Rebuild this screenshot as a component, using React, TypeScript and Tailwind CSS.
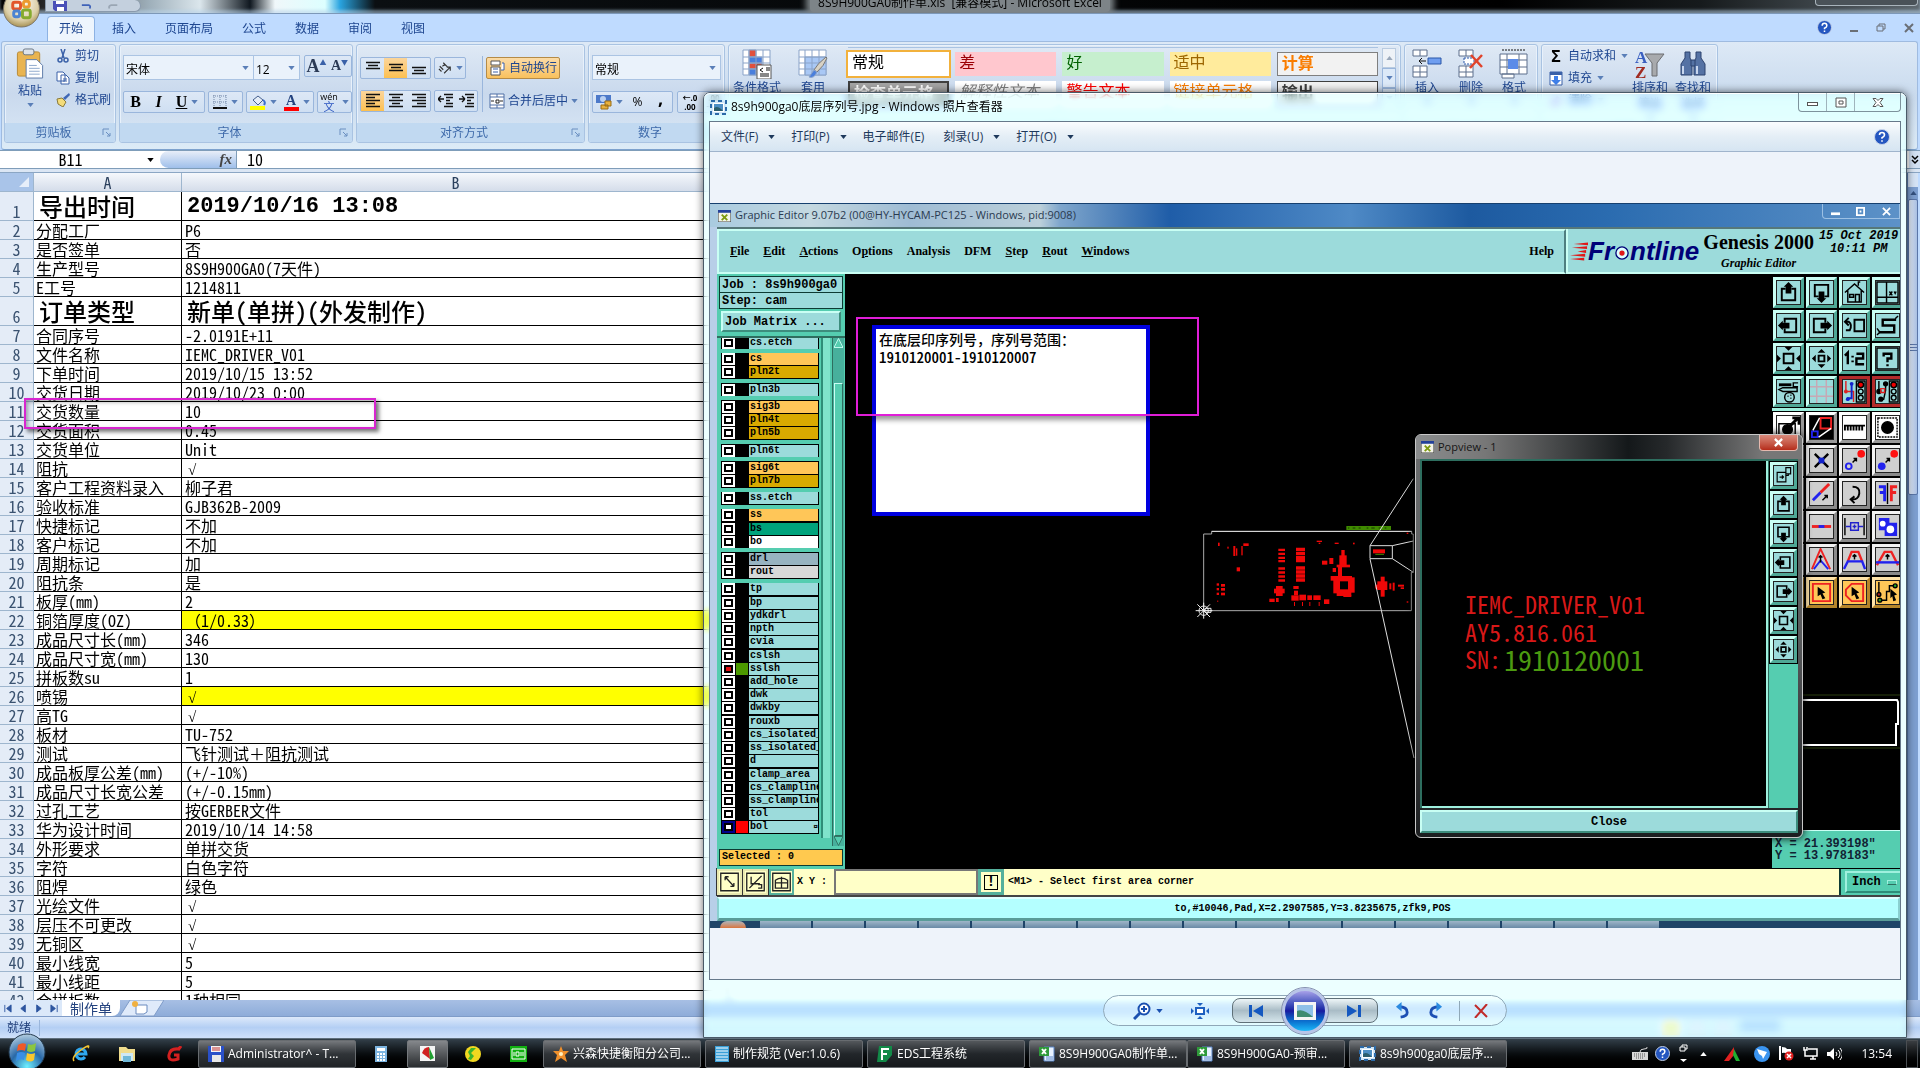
import type { ReactNode } from "react";

const half = "[font-feature-settings:'hwid']";
const cjk = "font-['Noto_Sans_CJK_SC',sans-serif]";
const ui = "font-['Open_Sans','Noto_Sans_CJK_SC',sans-serif]";
const mono = "font-['Liberation_Mono','Noto_Sans_CJK_SC',monospace]";
const serif = "font-['Liberation_Serif',serif]";

type Row = { a: string; b: string; big?: boolean; mark?: boolean };

const rows: Row[] = [
  { a: "导出时间", b: "2019/10/16 13:08", big: true },
  { a: "分配工厂", b: "P6" },
  { a: "是否签单", b: "否" },
  { a: "生产型号", b: "8S9H900GA0(7天件)" },
  { a: "E工号", b: "1214811" },
  { a: "订单类型", b: "新单(单拼)(外发制作)", big: true },
  { a: "合同序号", b: "-2.0191E+11" },
  { a: "文件名称", b: "IEMC_DRIVER_V01" },
  { a: "下单时间", b: "2019/10/15 13:52" },
  { a: "交货日期", b: "2019/10/23 0:00" },
  { a: "交货数量", b: "10" },
  { a: "交货面积", b: "0.45" },
  { a: "交货单位", b: "Unit" },
  { a: "阻抗", b: "√" },
  { a: "客户工程资料录入", b: "柳子君" },
  { a: "验收标准", b: "GJB362B-2009" },
  { a: "快捷标记", b: "不加" },
  { a: "客户标记", b: "不加" },
  { a: "周期标记", b: "加" },
  { a: "阻抗条", b: "是" },
  { a: "板厚(mm)", b: "2" },
  { a: "铜箔厚度(OZ)", b: "（1/0.33）", mark: true },
  { a: "成品尺寸长(mm)", b: "346" },
  { a: "成品尺寸宽(mm)", b: "130" },
  { a: "拼板数su", b: "1" },
  { a: "喷锡", b: "√", mark: true },
  { a: "高TG", b: "√" },
  { a: "板材", b: "TU-752" },
  { a: "测试", b: "飞针测试＋阻抗测试" },
  { a: "成品板厚公差(mm)", b: "(+/-10%)" },
  { a: "成品尺寸长宽公差", b: "(+/-0.15mm)" },
  { a: "过孔工艺", b: "按GERBER文件" },
  { a: "华为设计时间", b: "2019/10/14 14:58" },
  { a: "外形要求", b: "单拼交货" },
  { a: "字符", b: "白色字符" },
  { a: "阻焊", b: "绿色" },
  { a: "光绘文件", b: "√" },
  { a: "层压不可更改", b: "√" },
  { a: "无铜区", b: "√" },
  { a: "最小线宽", b: "5" },
  { a: "最小线距", b: "5" },
  { a: "合拼板数", b: "1种相同" },
];

// full-width punctuation keeps its full advance, the rest is half width
const Mixed = ({ text }: { text: string }) => (
  <>
    {text.split(/([（）＋，：√])/).map((part, i) =>
      part === "√" ? (
        <span key={i} className={`pl-[3px] text-[15px] leading-none ${serif}`}>√</span>
      ) : i % 2 ? (
        <span key={i} className="[font-feature-settings:normal]">{part}</span>
      ) : (
        part
      )
    )}
  </>
);

const Down = ({ className = "text-[#5a7fb8]" }: { className?: string }) => (
  <svg viewBox="0 0 8 5" className={`w-[7px] h-[4px] shrink-0 ${className}`}>
    <path d="M0 0h8L4 5z" fill="currentColor" />
  </svg>
);

/* ---------- Excel ribbon ---------- */

const Group = ({ label, width, children }: { label: string; width: string; children: ReactNode }) => (
  <section className={`${width} shrink-0 h-[99px] flex flex-col rounded-[3px] border border-[#a9c3e2] shadow-[inset_0_0_0_1px_#e8f1fb] bg-linear-to-b from-[#dfe9f5] via-[#c9d9ed] to-[#d9e7f5] overflow-hidden`}>
    <div className="flex-1 min-h-0 flex">{children}</div>
    <div className="h-[19px] shrink-0 bg-[#c1d9f1] text-[#3e6aaa] text-xs leading-[18px] flex items-center">
      <span className="flex-1 text-center">{label}</span>
      <svg viewBox="0 0 9 9" className="w-[9px] h-[9px] mr-1" fill="none" stroke="#6a8fc0">
        <path d="M1 7V1h6M4 4l4 4M8 5v3H5" />
      </svg>
    </div>
  </section>
);

const Box = ({ children, className = "" }: { children: ReactNode; className?: string }) => (
  <div className={`h-[22px] shrink-0 flex items-center rounded-[2px] border border-[#9ab6dc] bg-linear-to-b from-[#dde8f6] to-[#cfdff2] ${className}`}>
    {children}
  </div>
);

const Cell = ({ label, on, children, className = "w-[23px]" }: { label: string; on?: boolean; children: ReactNode; className?: string }) => (
  <button aria-label={label} className={`h-full flex items-center justify-center gap-1 ${on ? "bg-linear-to-b from-[#fbd59a] to-[#fdc04e]" : ""} ${className}`}>
    {children}
  </button>
);

const Combo = ({ label, value, className }: { label: string; value: string; className: string }) => (
  <span className={`relative block h-[25px] border border-[#abc4e3] bg-[#eaf2fb] ${className}`}>
    <select aria-label={label} className="appearance-none w-full h-full pl-[2px] pb-[2px] text-xs text-black bg-transparent leading-5">
      <option>{value}</option>
    </select>
    <span className="absolute right-1 top-[10px]"><Down /></span>
  </span>
);

const Lines = ({ d }: { d: string }) => (
  <svg viewBox="0 0 16 16" className="w-4 h-4" stroke="#111" strokeWidth="1.3"><path d={d} /></svg>
);

const SmallItem = ({ icon, children }: { icon: ReactNode; children: ReactNode }) => (
  <button className="h-[22px] flex items-center gap-[5px] text-xs text-[#1e4690]">
    {icon}
    {children}
  </button>
);

const Tall = ({ icon, label, className = "w-[56px]" }: { icon: ReactNode; label: string; className?: string }) => (
  <button className={`flex flex-col items-center pt-[4px] text-xs leading-4 text-[#1e4690] ${className}`}>
    <span className="h-[31px]">{icon}</span>
    <span className="whitespace-pre-line">{label}</span>
    <Down className="mt-1 text-[#5a7fb8]" />
  </button>
);

const Ribbon = () => (
  <div className="h-[109px] shrink-0 mx-[1px] mr-[2px] pt-[2px] pl-[2px] flex gap-[3px] rounded-[3px] border border-[#9fbbe0] border-b-[#7da2ce] bg-linear-to-b from-[#dde9f6] via-[#cadbee] to-[#dcebf7]">
    <Group label="剪贴板" width="w-[112px]">
      <button className="w-[50px] pt-[3px] flex flex-col items-center text-xs text-[#1e4690]">
        <svg viewBox="0 0 28 32" className="w-[28px] h-[31px]">
          <rect x="1" y="4" width="23" height="25" rx="2" fill="#e9b450" stroke="#b98a35" />
          <rect x="7" y="1" width="11" height="6" rx="2" fill="#dde3ea" stroke="#6b7885" />
          <path d="M10 12h11l6 6v13H10z" fill="#fff" stroke="#5e7ba8" />
          <path d="M13 18h8M13 21h11M13 24h11M13 27h11" stroke="#8fa9cc" />
        </svg>
        <span className="mt-[4px] mb-[4px]">粘贴</span>
        <Down />
      </button>
      <div className="pl-px flex flex-col">
        <SmallItem icon={<svg viewBox="0 0 14 14" className="w-[14px] h-[14px]" fill="none" stroke="#3a61a8" strokeWidth="1.5"><path d="M5 0l3 9M9 0L6 9" /><circle cx="4" cy="11" r="2" /><circle cx="10" cy="11" r="2" /></svg>}>剪切</SmallItem>
        <SmallItem icon={<svg viewBox="0 0 14 14" className="w-[14px] h-[14px]" fill="#fff" stroke="#3a61a8"><path d="M1 1h6l2 2v7H1zM5 4h5l3 3v6H5z" /><path d="M7 8h4M7 10h4" /></svg>}>复制</SmallItem>
        <SmallItem icon={<svg viewBox="0 0 14 14" className="w-[14px] h-[14px]"><path d="M13 0l1 2-5 5-2-2z" fill="#3f67b5" /><path d="M1 6l5-1 4 4-3 5-5-3z" fill="#f4dc7a" stroke="#8a7a3a" /></svg>}>格式刷</SmallItem>
      </div>
    </Group>

    <Group label="字体" width="w-[234px]">
      <div className="pl-[3px] pt-[10px] flex flex-col gap-[11px] w-full">
        <div className="flex items-start">
          <Combo label="字体" value="宋体" className="w-[131px]" />
          <Combo label="字号" value="12" className="w-[47px] -ml-px" />
          <Box className="ml-1">
            <Cell label="增大字号"><b className={`${serif} text-lg text-[#2b3a55]`}>A</b><sup className="text-[7px] text-[#3a61a8] -ml-1">▲</sup></Cell>
            <Cell label="减小字号"><b className={`${serif} text-sm text-[#2b3a55]`}>A</b><sup className="text-[7px] text-[#3a61a8] -ml-1">▼</sup></Cell>
          </Box>
        </div>
        <div className={`flex gap-[3px] ${serif} text-base text-black`}>
          <Box>
            <Cell label="加粗"><b>B</b></Cell>
            <Cell label="倾斜"><i className="font-bold">I</i></Cell>
            <Cell label="下划线" className="w-[34px]"><b className="underline">U</b><Down /></Cell>
          </Box>
          <Box>
            <Cell label="边框" className="w-[33px]">
              <svg viewBox="0 0 14 14" className="w-[14px] h-[14px]" stroke="#7387a8" strokeDasharray="1 1"><path d="M0 1h14M0 7h14M1 0v12M7 0v12M13 0v12" /><path d="M0 13h14" stroke="#111" strokeDasharray="none" strokeWidth="2" /></svg>
              <Down />
            </Cell>
          </Box>
          <Box>
            <Cell label="填充颜色" className="w-[33px]">
              <svg viewBox="0 0 16 16" className="w-4 h-4"><path d="M3 6l5-4 5 4-5 5z" fill="#e5edf7" stroke="#455f8c" /><path d="M13 6q3 2 1 5" stroke="#3a6fd0" fill="none" strokeWidth="2" /><path d="M0 12h15v4H0z" fill="#ff0" /></svg>
              <Down />
            </Cell>
            <Cell label="字体颜色" className="w-[33px]">
              <span className="flex flex-col items-center"><b className="text-sm leading-[13px] text-[#24437f]">A</b><span className="w-[15px] h-1 bg-[#f00]" /></span>
              <Down />
            </Cell>
          </Box>
          <Box>
            <Cell label="拼音" className="w-[33px]">
              <span className={`${ui} flex flex-col items-center`}><span className="text-[9px] leading-[8px]">wén</span><span className="text-[11px] leading-[11px] text-[#2b55c0]">文</span></span>
              <Down />
            </Cell>
          </Box>
        </div>
      </div>
    </Group>

    <Group label="对齐方式" width="w-[229px]">
      <div className="pl-[3px] pt-[12px] flex flex-col gap-[11px]">
        <div className="flex gap-[3px]">
          <Box>
            <Cell label="顶端对齐"><Lines d="M1 2.5h14M3 5.500h10M1 8.500h14" /></Cell>
            <Cell label="垂直居中" on><Lines d="M1 4.500h14M3 7.500h10M1 10.500h14" /></Cell>
            <Cell label="底端对齐"><Lines d="M1 7.500h14M3 10.500h10M1 13.500h14" /></Cell>
          </Box>
          <Box>
            <Cell label="方向" className="w-[30px]">
              <svg viewBox="0 0 16 16" className="w-[14px] h-[14px]" fill="none" stroke="#333" strokeWidth="1.3"><path d="M2 6l4 4M1 9l3 3M6 2l5 5M5 6l3-2M7 14l7-7M14 11V7h-4" /></svg>
              <Down />
            </Cell>
          </Box>
        </div>
        <div className="flex gap-[3px]">
          <Box>
            <Cell label="左对齐" on><Lines d="M1 1.500h14M1 4.500h9M1 7.500h14M1 10.500h9M1 13.500h14" /></Cell>
            <Cell label="居中"><Lines d="M1 1.500h14M4 4.500h8M1 7.500h14M4 10.500h8M1 13.500h14" /></Cell>
            <Cell label="右对齐"><Lines d="M1 1.500h14M6 4.500h9M1 7.500h14M6 10.500h9M1 13.500h14" /></Cell>
          </Box>
          <Box>
            <Cell label="减少缩进" className="w-[21px]"><Lines d="M6 1.500h9M8 4.500h7M8 7.500h4M8 10.500h7M6 13.500h9M0 6h6M0 6l3-3M0 6l3 3" /></Cell>
            <Cell label="增加缩进" className="w-[21px]"><Lines d="M6 1.500h9M8 4.500h7M8 7.500h4M8 10.500h7M6 13.500h9M0 6h6M6 6L3 3M6 6L3 9" /></Cell>
          </Box>
        </div>
      </div>
      <div className="ml-1 mt-[11px] h-[56px] w-px bg-[#9ab6dc]" />
      <div className="pl-[3px] pt-[12px] flex flex-col gap-[11px] text-xs text-[#1e4690]">
        <button className="w-[74px] h-[22px] flex items-center gap-[3px] px-[3px] whitespace-nowrap rounded-[2px] border border-[#b58b47] bg-linear-to-b from-[#fbdba6] to-[#f9c15c]">
          <svg viewBox="0 0 16 16" className="w-4 h-4 shrink-0" fill="#fff" stroke="#555"><path d="M1 1h9v4H1zM1 7h9v8H1z" /><path d="M3 9h5M3 12h5M12 3h2v7h-3" stroke="#3a61a8" /></svg>
          自动换行
        </button>
        <button className="h-[22px] flex items-center gap-[3px] px-[3px] whitespace-nowrap">
          <svg viewBox="0 0 16 16" className="w-4 h-4" fill="#fff" stroke="#4e6fa5"><path d="M1 1h14v14H1zM1 4h14M1 12h14M8 1v3M8 12v3" /><path d="M2 8h3M11 8h3M7 7h3v3H7z" stroke="#222" /></svg>
          合并后居中
          <Down />
        </button>
      </div>
    </Group>

    <Group label="数字" width="w-[137px]">
      <div className="pl-[3px] pt-[10px] flex flex-col gap-[11px]">
        <Combo label="数字格式" value="常规" className="w-[129px]" />
        <div className="flex gap-1 text-xs text-black">
          <Box>
            <Cell label="会计数字格式" className="w-[33px]">
              <svg viewBox="0 0 16 16" className="w-4 h-4"><path d="M0 1h15v8H0z" fill="#4c79c9" /><circle cx="7" cy="5" r="3" fill="#b9d0f2" /><path d="M5 11h7v4H5zM9 7h6v5H9z" fill="#e8b13d" stroke="#9a6c12" /></svg>
              <Down />
            </Cell>
            <Cell label="百分比">%</Cell>
            <Cell label="千位分隔"><b className="text-lg leading-4 pb-2">,</b></Cell>
          </Box>
          <Box>
            <Cell label="增加小数位" className="w-[24px]"><span className="text-[8px] leading-[9px] font-bold">←.0<br />.00</span></Cell>
            <Cell label="减少小数位" className="w-[24px]"><span className="text-[8px] leading-[9px] font-bold">.00<br />→.0</span></Cell>
          </Box>
        </div>
      </div>
    </Group>

    <Group label="样式" width="w-[673px]">
      <Tall label="条件格式" icon={
        <svg viewBox="0 0 30 30" className="w-[30px] h-[30px]" stroke="#8aa3c8"><path d="M1 1h27v25H1z" fill="#fff" /><path d="M7 1h7v7H7zM7 14h13v6H7z" fill="#e2503c" /><path d="M7 8h13v6H7zM7 20h7v6H7z" fill="#4a7fdc" /><path d="M1 8h27M1 14h27M1 20h27M7 1v25M14 1v25M21 1v25" fill="none" /><path d="M15 16h14v14H15z" fill="#fff" stroke="#555" /><path d="M21 19l-3 2 3 2M24 19h4M24 21h4M18 27h9M18 25h9" stroke="#111" fill="none" /></svg>} />
      <Tall label="套用" icon={
        <svg viewBox="0 0 30 30" className="w-[30px] h-[30px]" stroke="#8aa3c8"><path d="M1 1h27v25H1z" fill="#fff" /><path d="M7 8h21v18H7z" fill="#a9c8f5" /><path d="M1 8h27M1 14h27M1 20h27M7 1v25M14 1v25M21 1v25" fill="none" /><path d="M28 8q-9 7-12 13l3 2q7-6 10-14z" fill="#d8d2c4" stroke="#777" /><path d="M16 21l-5 7q5 2 8-5z" fill="#4a7fdc" /></svg>} />
      <div className="mt-[2px] ml-[7px] w-[530px] grid grid-cols-5 gap-x-[6px] gap-y-[5px] pt-[4px] auto-rows-[24px] text-base leading-[20px] border-t border-[#a9c3e2]">
        {[
          ["常规", "bg-white text-black outline-2 outline-[#f2b13c]"],
          ["差", "bg-[#ffc7ce] text-[#9c0006]"],
          ["好", "bg-[#c6efce] text-[#006100]"],
          ["适中", "bg-[#ffeb9c] text-[#9c6500]"],
          ["计算", "bg-[#f2f2f2] text-[#fa7d00] border border-[#7f7f7f] font-bold"],
          ["检查单元格", "bg-[#a5a5a5] text-white border-2 border-double border-[#3f3f3f] font-bold"],
          ["解释性文本", "bg-white text-[#7f7f7f] italic"],
          ["警告文本", "bg-white text-[#f00]"],
          ["链接单元格", "bg-white text-[#fa7d00]"],
          ["输出", "bg-[#f2f2f2] text-[#3f3f3f] border border-[#3f3f3f] font-bold"],
        ].map(([name, tone]) => (
          <button key={name} className={`pl-1 flex items-start text-left overflow-hidden ${tone}`}>{name}</button>
        ))}
      </div>
      <div className="mt-[3px] ml-[4px] w-[14px] flex flex-col">
        <button aria-label="上" className="h-[20px] border border-[#b9cbe0] bg-[#eef2f7] flex items-center justify-center"><Down className="rotate-180 text-[#9aa8ba]" /></button>
        <button aria-label="下" className="h-[20px] border border-[#9ab6dc] bg-[#dce9f8] flex items-center justify-center"><Down /></button>
        <button aria-label="更多" className="h-[20px] border border-[#9ab6dc] bg-[#dce9f8] flex items-center justify-center"><Down /></button>
      </div>
    </Group>

    <Group label="单元格" width="w-[134px]">
      <Tall label="插入" className="w-[44px]" icon={<svg viewBox="0 0 30 30" className="w-[30px] h-[30px]" fill="#fff" stroke="#5d6f8c"><path d="M1 1h14v6H1zM1 17h14v11H1zM8 1v6M8 17v11M1 23h14" /><path d="M16 9h13v6H16z" fill="#6f9ef0" stroke="#2b56a8" /><path d="M14 12H7M10 9l-3 3 3 3" stroke="#111" fill="none" /></svg>} />
      <Tall label="删除" className="w-[44px]" icon={<svg viewBox="0 0 30 30" className="w-[30px] h-[30px]" fill="#fff" stroke="#5d6f8c"><path d="M3 1h14v6H3zM3 17h14v11H3zM10 1v6M10 17v11M3 23h14" /><path d="M8 9h10v6H8z" stroke="#2b56a8" strokeDasharray="2 1" /><path d="M15 6l11 12M26 6L14 19" stroke="#e0432b" strokeWidth="2.500" /></svg>} />
      <Tall label="格式" className="w-[42px]" icon={<svg viewBox="0 0 30 30" className="w-[30px] h-[30px]" fill="#fff" stroke="#5d6f8c"><path d="M1 5h27v20H1zM1 11h27M1 18h27M8 5v20M20 5v20M3 25h12v4H3z" /><path d="M9 10h10v10H9z" fill="#5b8be8" stroke="none" /><path d="M3 1h24" stroke="#111" strokeDasharray="2 1" /></svg>} />
    </Group>

    <Group label="编辑" width="w-[177px]">
      <div className="pl-[7px] w-[86px] flex flex-col">
        <SmallItem icon={<b className="w-[14px] text-base text-black">Σ</b>}>自动求和<Down /></SmallItem>
        <SmallItem icon={<svg viewBox="0 0 14 15" className="w-[14px] h-[15px]"><path d="M1 1h12v13H1z" fill="#fff" stroke="#3a61a8" /><path d="M1 1h12v3H1z" fill="#3a61a8" /><path d="M5 5h4v4h3l-5 5-5-5h3z" fill="#3f7fe8" /></svg>}>填充<Down /></SmallItem>
        <SmallItem icon={<svg viewBox="0 0 14 14" className="w-[14px] h-[14px]"><path d="M1 10l7-7 5 3-6 7H4z" fill="#a99bd8" /></svg>}>清除<Down /></SmallItem>
      </div>
      <Tall label={"排序和\n筛选"} className="w-[44px]" icon={<svg viewBox="0 0 30 30" className="w-[30px] h-[30px]"><text x="0" y="14" className="font-['Liberation_Serif',serif] font-bold" fontSize="17" fill="#3a5fc0">A</text><text x="0" y="29" className="font-['Liberation_Serif',serif] font-bold" fontSize="17" fill="#a02b22">Z</text><path d="M10 5h19l-7 9v13h-5V14z" fill="#a8aaad" stroke="#6b6d70" /></svg>} />
      <Tall label={"查找和\n选择"} className="w-[42px]" icon={<svg viewBox="0 0 30 30" className="w-[30px] h-[30px]" fill="#5572a4" stroke="#2d436e"><path d="M7 3h5v6l2 4v13H3V15l4-6zM18 3h5v6l4 6v11H16V13l2-4z" /><path d="M13 11h4v6h-4z" /><path d="M5 17v8M19 17v8" stroke="#c8d6ee" strokeWidth="2" /></svg>} />
    </Group>
  </div>
);

const OfficeOrb = () => (
  <svg viewBox="0 0 40 40" className="absolute left-[2px] -top-[11px] w-[39px] h-[40px] z-10">
    <defs>
      <radialGradient id="orb" cx=".5" cy=".35" r=".65"><stop offset="0" stopColor="#fff" /><stop offset=".7" stopColor="#dccfa8" /><stop offset="1" stopColor="#a89254" /></radialGradient>
    </defs>
    <circle cx="20" cy="20" r="18.500" fill="url(#orb)" stroke="#7a7468" />
    <g fill="none" strokeWidth="3">
      <rect x="11" y="13" width="8" height="7" rx="2" stroke="#e2562b" />
      <rect x="22" y="12" width="6" height="6" rx="2" stroke="#eb9a2e" />
      <rect x="12" y="22" width="6" height="6" rx="2" stroke="#4b84d2" />
      <rect x="21" y="21" width="8" height="8" rx="2" stroke="#86ab2e" />
    </g>
  </svg>
);

const Help = ({ className = "w-[15px] h-[15px]" }: { className?: string }) => (
  <svg viewBox="0 0 16 16" className={className}>
    <circle cx="8" cy="8" r="7.500" fill="#2456c0" stroke="#c8d4ea" />
    <path d="M5.500 6q0-2.500 2.500-2.500T10.500 6Q10.500 7.300 8 8.800v1M8 11.300v1.500" fill="none" stroke="#fff" strokeWidth="1.600" />
  </svg>
);

const Excel = () => (
  <div className={`relative flex-1 min-h-0 flex flex-col bg-[#bfdbff] ${ui}`}>
    <OfficeOrb />
    <header className="relative h-[14px] shrink-0 overflow-hidden flex items-end justify-center bg-[linear-gradient(90deg,#000_0,#222_40px,#9fb0bb_150px,#dbe6ec_200px,#101820_250px,#f0f7fa_275px,#dff_325px,#29a4e0_340px,#0b0f12_375px,#000_1500px,#161a1c_1700px,#5d676e_1918px)] border-b border-[#7d98b8] shadow-[inset_0_-3px_3px_#b8d2ea90]">
      <div className="absolute left-[45px] top-0 w-[96px] h-[12px] rounded-r-full border border-t-0 border-[#8a9aac] bg-[#c4d0de] flex items-center pl-[7px] gap-[14px]">
        <svg viewBox="0 0 14 10" className="w-[14px] h-[10px]"><path d="M0 0h14v10H2L0 8z" fill="#4a50b8" /><path d="M3 0h8v3H3zM4 6h7v4H4z" fill="#fff" /></svg>
        <svg viewBox="0 0 14 8" className="w-[12px] h-[8px]" fill="none" stroke="#3f62b8" strokeWidth="2"><path d="M1 3h8q3 1 1 4" /></svg>
        <svg viewBox="0 0 14 8" className="w-[12px] h-[8px]" fill="none" stroke="#9aa6b4" strokeWidth="2"><path d="M12 3H5Q1 4 3 7" /></svg>
      </div>
      <h1 className="mb-px text-xs leading-[18px] whitespace-pre text-black bg-[#7d8488] px-2 rounded shadow-[0_0_6px_4px_#7d8488]">8S9H900GA0制作单.xls  [兼容模式] - Microsoft Excel</h1>
      <div className="absolute right-[2px] top-0 w-[103px] h-[6px] rounded-b border border-t-0 border-[#a9b4bc] grid grid-cols-3 divide-x divide-[#8a949c] bg-[#4a5258]" />
    </header>
    <nav className="h-[27px] shrink-0 pl-[47px] flex items-end text-xs text-[#1e4690]">
      {["开始", "插入", "页面布局", "公式", "数据", "审阅", "视图"].map((tab, i) => (
        <button key={tab} className={i === 0 ? "h-[25px] w-[48px] mr-[3px] rounded-t border border-b-0 border-[#8db2e3] bg-[#eef5fd] text-[#1e4690]" : "h-[25px] px-[14px] mr-px whitespace-nowrap"}>{tab}</button>
      ))}
      <div className="ml-auto h-full pr-[6px] flex items-center gap-[18px] text-[#6a6f76]">
        <Help />
        <svg viewBox="0 0 8 8" className="w-2 h-2"><path d="M0 6h8v2H0z" fill="currentColor" /></svg>
        <svg viewBox="0 0 10 9" className="w-[10px] h-[9px]" fill="none" stroke="currentColor"><path d="M3 3V1h6v5H7M1 3h6v5H1z" /></svg>
        <svg viewBox="0 0 10 10" className="w-[10px] h-[10px]" stroke="currentColor" strokeWidth="2"><path d="M1 1l8 8M9 1L1 9" /></svg>
      </div>
    </nav>
    <Ribbon />
    <div className={`h-[19px] shrink-0 flex bg-white border-y border-[#7f9db9] text-base leading-[17px] ${cjk} ${half}`}>
      <label className="flex items-center w-[160px]">
        <input aria-label="名称框" defaultValue="B11" className={`w-[147px] pr-[6px] h-[17px] text-center ${half}`} />
        <Down className="text-black" />
      </label>
      <div className="w-[77px] rounded-l-full border-r border-[#7f9db9] bg-linear-to-b from-[#e8eef8] to-[#9fbfea] flex justify-end items-center pr-1">
        <i className={`${serif} font-bold text-[#444] text-[15px] leading-[15px]`}>fx</i>
      </div>
      <input aria-label="编辑栏" defaultValue="10" className={`flex-1 h-[17px] pl-[10px] ${half}`} />
      <button aria-label="展开编辑栏" className="w-[11px] bg-[#d3e1f3] flex items-center justify-center">
        <svg viewBox="0 0 8 10" className="w-[8px] h-[10px]" fill="none" stroke="#000" strokeWidth="1.500"><path d="M1 1l3 3 3-3M1 5l3 3 3-3" /></svg>
      </button>
    </div>
    <div className="h-[4px] shrink-0 bg-[#dbe6f4] border-b border-[#8ba6c4]" />
    <div className="flex-1 min-h-0 flex">
      <div className={`relative flex-1 min-w-0 overflow-hidden bg-white ${cjk} ${half}`}>
        <table className="table-fixed w-[730px] border-separate border-spacing-0 text-base leading-[18px] text-black">
          <colgroup>
            <col className="w-[34px]" />
            <col className="w-[148px]" />
            <col />
          </colgroup>
          <thead>
            <tr className="h-[19px] bg-linear-to-b from-[#f5f8fc] to-[#d3dbe9] text-[#2a3f5c]">
              <th className="p-0 bg-[#a9c4e9] border-r border-b border-[#9eb6ce]">
                <svg viewBox="0 0 12 12" className="ml-auto mr-[4px] w-[10px] h-[10px]"><path d="M12 0v12H0z" fill="#e6eefa" /></svg>
              </th>
              <th className="p-0 font-normal border-r border-b border-[#9eb6ce]">A</th>
              <th className="p-0 font-normal border-r border-b border-[#9eb6ce]">B</th>
            </tr>
          </thead>
          <tbody>
            {rows.map((row, i) => (
              <tr key={i}>
                <th className={`p-0 font-normal align-bottom border-r border-b border-[#9eb6ce] bg-[#e4ecf7] text-[#3a5270] ${row.big ? "h-[29px]" : "h-[19px]"}`}>{i + 1}</th>
                <td className={`p-0 align-top border-r border-b border-black whitespace-nowrap ${row.big ? "pl-[5px] font-medium" : "pl-[2px]"}`}>
                  <div className={row.big ? "h-[28px] text-2xl leading-[28px]" : "h-[18px]"}>{row.a}</div>
                </td>
                <td className={`p-0 align-top border-b border-r border-black whitespace-pre ${row.mark ? "bg-[#ff0]" : ""} ${row.big ? "pl-[5px] font-medium" : "pl-[3px]"}`}>
                  <div className={i === 0 ? `h-[28px] text-[22px] leading-[30px] font-bold ${mono}` : row.big ? "h-[28px] text-2xl leading-[28px]" : "h-[18px]"}>
                    <Mixed text={row.b} />
                  </div>
                </td>
              </tr>
            ))}
          </tbody>
        </table>
        <div className="absolute left-[24px] top-[225px] w-[352px] h-[31px] border-2 border-[#d826d0] shadow-[3px_3px_4px_#0008,inset_2px_2px_4px_#0005]" />
      </div>
      <div className="w-[11px] mr-[2px] flex flex-col bg-[#7d9fd0] border-l border-[#5a7db0]">
        <span className="h-[14px] bg-[#d5e3f5]" />
        <span className="h-[12px] flex items-center justify-center"><Down className="rotate-180 text-[#34517f]" /></span>
        <span className="h-[296px] rounded-[2px] border border-[#5a76a8] bg-linear-to-r from-[#e6effb] to-[#a8bfe2] flex flex-col items-center justify-center gap-[2px]">
          <i className="w-[7px] h-px bg-[#5a76a8]" />
          <i className="w-[7px] h-px bg-[#5a76a8]" />
          <i className="w-[7px] h-px bg-[#5a76a8]" />
        </span>
      </div>
    </div>
    <div className="h-[16px] shrink-0 flex bg-linear-to-b from-[#a7bfe4] to-[#8eacd9]">
      <div className="w-[62px] flex items-center justify-around bg-[#dbe8f9] text-[#2d559f]">
        {["M2 1v8M9 1L4 5l5 4z", "M7 1L2 5l5 4z", "M3 1l5 4-5 4z", "M8 1v8M1 1l5 4-5 4z"].map((d) => (
          <button key={d} aria-label="切换工作表"><svg viewBox="0 0 10 10" className="w-[9px] h-[9px]" fill="currentColor" stroke="currentColor"><path d={d} /></svg></button>
        ))}
      </div>
      <button className={`w-[58px] bg-white text-sm leading-4 text-[#24437f] rounded-br-lg ${cjk}`}>制作单</button>
      <svg viewBox="0 0 44 16" className="w-[44px] h-4"><path d="M0 16L10 0h34L34 16z" fill="#dfeafa" stroke="#7f9cc8" /><path d="M16 5h11v7l-3 2h-8z" fill="#fff" stroke="#6b8bbf" /><circle cx="15" cy="4" r="3" fill="#f0b040" /></svg>
    </div>
    <footer className="h-[22px] shrink-0 flex items-center border-t border-[#7f9cc8] bg-linear-to-b from-[#dde9fa] via-[#b4cff4] to-[#cfe1fa] text-xs text-[#1e3c78]">
      <span className="w-[40px] pl-[7px] border-r border-[#9ab6dc]">就绪</span>
      <span className="ml-auto mr-[140px] flex gap-2">
        <i className="w-[18px] h-[14px] bg-[#f0d890]" />
        <i className="w-[18px] h-[14px] bg-[#c8cfdc]" />
        <i className="w-[18px] h-[14px] bg-[#c8cfdc]" />
        <i className="w-[40px] h-[10px] bg-[#8fb0e4]" />
      </span>
    </footer>
  </div>
);

/* ---------- Genesis editor ---------- */

const toolTones = {
  teal: "bg-[#9cdbdb] border-t-[#c9fff4] border-l-[#c9fff4] border-b-[#4fa896] border-r-[#4fa896]",
  white: "bg-white border-t-white border-l-white border-b-[#999] border-r-[#999]",
  gray: "bg-[#cfcfcf] border-t-[#f2f2f2] border-l-[#f2f2f2] border-b-[#8a8a8a] border-r-[#8a8a8a]",
  gold: "bg-[#ffc658] border-t-[#ffe3a8] border-l-[#ffe3a8] border-b-[#b5852a] border-r-[#b5852a]",
  red: "bg-[#9cdbdb] border-[#b32a2a]",
};

const Tool = ({ label, tone = "teal", children, className = "w-[33px] h-[33px]" }: { label: string; tone?: keyof typeof toolTones; children: ReactNode; className?: string }) => (
  <button aria-label={label} className={`shrink-0 p-px bg-black ${className}`}>
    <span className={`flex w-full h-full border-[3px] ${toolTones[tone]}`}>
      <svg viewBox="0 0 24 24" className="w-full h-full border border-[#222]" fill="none" stroke="#000" strokeWidth="1.500">{children}</svg>
    </span>
  </button>
);

const glyphs = {
  up: <><path d="M9 8H5v12h14V8h-4" strokeWidth="2" /><path d="M12 1l5 5h-2v7H9V6H7z" fill="#000" stroke="none" /></>,
  down: <><path d="M9 16H5V4h14v12h-4" strokeWidth="2" /><path d="M12 23l5-5h-2v-7H9v7H7z" fill="#000" stroke="none" /></>,
  left: <><path d="M8 9V5h12v14H8v-4" strokeWidth="2" /><path d="M1 12l5-5v2h7v6H6v2z" fill="#000" stroke="none" /></>,
  right: <><path d="M16 9V5H4v14h12v-4" strokeWidth="2" /><path d="M23 12l-5-5v2h-7v6h7v2z" fill="#000" stroke="none" /></>,
  out: <><path d="M7 7h10v10H7z" strokeWidth="2" /><path d="M8 0h8l-4 4zM8 24h8l-4-4zM0 8v8l4-4zM24 8v8l-4-4z" fill="#000" stroke="none" /></>,
  zoomIn: <><path d="M9 9h6v6H9z" strokeWidth="2" /><path d="M8 6h8l-4-4zM8 18h8l-4 4zM6 8v8l-4-4zM18 8v8l4-4z" fill="#000" stroke="none" /></>,
  pop: <><path d="M4 8h11v12H4zM15 2h6v8h-6zM7 14h5M10 12l2 2-2 2M15 12h3v-2" /></>,
};

const Light = () => (
  <>
    <path d="M14 1h9v22h-9z" />
    <circle cx="18.500" cy="5" r="3" fill="#e00" />
    <circle cx="18.500" cy="12" r="2.500" />
    <circle cx="18.500" cy="18.500" r="2.500" />
  </>
);

const tools: [string, keyof typeof toolTones, ReactNode][] = [
  ["pan up", "teal", glyphs.up],
  ["pan down", "teal", glyphs.down],
  ["home", "teal", <><path d="M2 12L12 3l10 9M5 10v12h14V10M16 5V1h2M7 14h4v3H7zM13 14h4v8h-4z" /></>],
  ["xy view", "teal", <><path d="M1 1h22v22H1zM11 1v22M1 17h22M14 11l3 4M17 11l-3 4M19 11l1 2 1-2" /></>],
  ["pan left", "teal", glyphs.left],
  ["pan right", "teal", glyphs.right],
  ["previous view", "teal", <><path d="M12 6h10v12H12z" strokeWidth="2" /><path d="M3 8h3q4 3 1 9H3M6 4L2 8l4 4" strokeWidth="2" /></>],
  ["route view", "teal", <><path d="M21 6H7v6h12v7H3" strokeWidth="2.500" /><path d="M1 15l3 4-3 3M23 2l-3 3" /></>],
  ["zoom out", "teal", glyphs.out],
  ["zoom in", "teal", glyphs.zoomIn],
  ["scale", "teal", <><path d="M2 9l3-3v12M10 9v2M10 14v2M14 7h7v5h-7v6h8" strokeWidth="2.500" /></>],
  ["help", "teal", <><path d="M1 1h22v22H1z" /><path d="M8 10V7h8v5h-4v4M12 18v2" strokeWidth="2.500" /></>],
  ["setup", "teal", <><path d="M2 5h13" strokeWidth="3" /><path d="M22 3h-5v4h5M2 10l4-2h15v4H6z" /><circle cx="13" cy="18" r="5" /><path d="M11 17h1M14 16h1M14 19h1" /></>],
  ["grid", "teal", <path d="M7 0v24M17 0v24M0 7h24M0 17h24" stroke="#c7a8b4" />],
  ["netlist on", "red", <><path d="M3 1v11h8v11" stroke="#d22" /><circle cx="3" cy="12" r="2" fill="#d22" stroke="none" /><path d="M9 3v16H4" stroke="#12c" strokeWidth="2" /><circle cx="9" cy="4" r="2" fill="#12c" stroke="none" /><circle cx="5" cy="20" r="2" fill="#12c" stroke="none" /><Light /></>],
  ["netlist off", "red", <><path d="M3 1v11M10 3v8L8 20H4" /><circle cx="3" cy="12" r="2" fill="#000" /><circle cx="10" cy="4" r="2" fill="#000" /><circle cx="5" cy="20" r="2" fill="#000" /><path d="M5 9h4v4H5z" stroke="#d22" /><Light /></>],
  ["select", "white", <><path d="M2 8h17v15H2z" /><circle cx="11" cy="14" r="5" fill="#000" /><path d="M13 11l8-8M16 2h7v7" strokeWidth="3" /></>],
  ["copy area", "white", <><path d="M0 0h24v24H0z" fill="#000" /><path d="M11 2h11v11H11z" stroke="#e22" strokeWidth="2" /><path d="M2 16h6v6H2z" stroke="#22e" strokeWidth="2" /><path d="M3 15L10 2M9 22l13-9" stroke="#fff" /></>],
  ["measure", "white", <><path d="M1 10h22M2 10v5M5 10v5M8 10v5M11 10v5M14 10v5M17 10v5M20 10v5" strokeWidth="2" /></>],
  ["pad", "white", <><path d="M2 2h20v20H2z" strokeDasharray="2 1" /><circle cx="12" cy="12" r="6" fill="#000" /></>],
  ["", "gray", null],
  ["delete", "gray", <><path d="M5 5l14 14M19 5L5 19" strokeWidth="2.500" /><path d="M9 9h6v6H9z" fill="#12c" stroke="none" /></>],
  ["move", "gray", <><circle cx="19" cy="5" r="4" fill="#f11" stroke="none" /><circle cx="6" cy="18" r="3" stroke="#22e" strokeWidth="2" /><path d="M10 14l4-4M11 10h3v3" /></>],
  ["copy", "gray", <><circle cx="19" cy="5" r="4" fill="#f11" stroke="none" /><circle cx="6" cy="18" r="4" fill="#22e" stroke="none" /><path d="M10 14l4-4M11 10h3v3" /></>],
  ["", "gray", null],
  ["stretch", "gray", <><path d="M3 19l8-8" stroke="#22e" strokeWidth="3" /><path d="M11 11l9-9" stroke="#e22" strokeWidth="3" /><path d="M13 19l5-5M15 14h3v3" /></>],
  ["rotate", "gray", <><path d="M10 5q8 0 7 7t-8 6M12 15l-4 3 4 4" strokeWidth="2" /></>],
  ["mirror", "gray", <><path d="M3 5h6v15M4 11h5" stroke="#22e" strokeWidth="3" /><path d="M12 1v22" /><path d="M22 5h-6v15M21 11h-5" stroke="#e22" strokeWidth="3" /></>],
  ["", "gray", null],
  ["line", "gray", <><path d="M2 12h20" stroke="#e22" strokeWidth="3" /><path d="M9 12h6" stroke="#22e" strokeWidth="3" /></>],
  ["spread", "gray", <><path d="M2 3v18M22 3v18" /><path d="M3 12h5M16 12h5M8 8h8v8H8zM10 12h4M12 10v4" stroke="#22c" /></>],
  ["merge", "gray", <><path d="M3 3h11v5h8v14H9v-6H3z" fill="#22e" stroke="none" /><circle cx="7" cy="9" r="3" fill="#fff" stroke="none" /><circle cx="15" cy="15" r="4" fill="#fff" stroke="none" /></>],
  ["", "gray", null],
  ["angle", "gray", <><path d="M2 22L11 1l10 21" stroke="#e22" strokeWidth="2" /><path d="M4 22l7-9 8 9" stroke="#22e" strokeWidth="2" /><path d="M11 15V9M9 10l2-2 2 2" /></>],
  ["trapezoid", "gray", <><path d="M5 14L9 4h7l4 10" stroke="#e22" strokeWidth="2.500" /><path d="M1 22l4-8h15l3 8" stroke="#22e" strokeWidth="2.500" /><path d="M12 12V7M10 9l2-2 2 2" /></>],
  ["trapezoid cut", "gray", <><path d="M1 18L9 4h7l7 14" stroke="#e22" strokeWidth="2.500" /><path d="M0 15h24" stroke="#22e" strokeWidth="2.500" /><path d="M12 12V7M10 9l2-2 2 2" /></>],
  ["", "gold", null],
  ["select box", "gold", <><path d="M3 3h18v18H3z" stroke="#e22" strokeWidth="2" /><path d="M8 6l8 6-3 1 3 5-3 1-2-5-3 2z" fill="#000" stroke="none" /></>],
  ["select polygon", "gold", <><path d="M9 3h12v18H9l-6-6V9z" stroke="#e22" strokeWidth="2" /><path d="M9 6l8 6-3 1 3 5-3 1-2-5-3 2z" fill="#000" stroke="none" /></>],
  ["select net", "gold", <><path d="M3 1v13M4 20h7v-9h3V5h5" /><circle cx="3" cy="14" r="2" fill="#a22" /><circle cx="4" cy="20" r="2" fill="#2a2" /><circle cx="20" cy="5" r="2" fill="#2a2" /><path d="M15 8l7 6-3 1 2 5-3 1-1-5-2 2z" fill="#000" stroke="none" /></>],
];

const cyan = "bg-[#9cdbdb]";
const orange = "bg-[#ffc658]";
const ochre = "bg-[#d9aa00]";

const layers: [string, string][][] = [
  [["cs.etch", cyan]],
  [["cs", orange], ["pln2t", ochre]],
  [["pln3b", cyan]],
  [["sig3b", orange], ["pln4t", ochre], ["pln5b", ochre]],
  [["pln6t", cyan]],
  [["sig6t", orange], ["pln7b", ochre]],
  [["ss.etch", cyan]],
  [["ss", orange], ["bs", "bg-[#00a37c]"], ["bo", "bg-white"]],
  [["drl", "bg-[#97b3c0]"], ["rout", "bg-[#d8d8d8]"]],
  ["tp", "bp", "ydkdrl", "npth", "cvia", "cslsh", "sslsh", "add_hole", "dwk", "dwkby", "rouxb", "cs_isolated_", "ss_isolated_", "d", "clamp_area", "cs_clampline", "ss_clampline", "tol", "bol"].map((n): [string, string] => [n, cyan]),
];

const LayerPanel = () => (
  <aside className={`w-[128px] shrink-0 flex flex-col bg-[#55cdb0] ${mono} font-bold text-xs text-black`}>
    <div className="m-[2px] mb-0 border border-[#0d3b33]">
      <p className="h-[16px] leading-[16px] pl-[2px] bg-[#9cdbdb] border-b border-[#0d3b33] whitespace-pre overflow-hidden">Job : 8s9h900ga0</p>
      <p className="h-[15px] leading-[16px] pl-[2px] bg-[#9cdbdb]">Step: cam</p>
    </div>
    <button className="mx-[4px] mt-[2px] h-[21px] shrink-0 pl-[2px] text-left bg-[#9cdbdb] border-2 border-t-[#c9fff4] border-l-[#c9fff4] border-b-[#3d8d7d] border-r-[#3d8d7d]">Job Matrix ...</button>
    <div className="flex-1 min-h-0 mt-[4px] flex border-t-2 border-[#2e6e5f]">
      <ul className="w-[98px] ml-[4px] mb-[12px] flex flex-col gap-[4px] text-[10px] overflow-hidden">
        {layers.map((group, g) => (
          <li key={g} className="min-h-0 basis-0 bg-black px-px flex flex-col overflow-hidden justify-end" style={{ flexGrow: g === 0 ? 0.8 : group.length }}>
            {group.map(([name, tone]) => (
              <label key={name} className="flex-1 min-h-0 flex items-center">
                <input
                  type="checkbox"
                  defaultChecked={name === "sslsh"}
                  className={`appearance-none w-[13px] h-[12px] shrink-0 border-2 shadow-[inset_0_0_0_2px_#000] ${name === "bol" ? "border-[#00008c] bg-white" : name === "sslsh" ? "border-white bg-[#e01010]" : "border-white bg-white"}`}
                />
                <span className={`w-[12px] h-[12px] mx-px shrink-0 ${name === "bol" ? "bg-[#f00]" : name === "sslsh" ? "bg-[#4c9900]" : "bg-black"}`} />
                <span className={`flex-1 h-[12px] leading-[12px] pl-px overflow-hidden flex justify-between ${tone}`}>
                  {name}
                  {name === "bol" && <span className="text-[8px]">¤</span>}
                </span>
              </label>
            ))}
          </li>
        ))}
      </ul>
      <div className="w-[9px] border-l-2 border-[#2e8d78] bg-[#7fe3cb] mb-2 ml-[2px]" />
      <div className="w-[12px] ml-auto mr-px flex flex-col items-center bg-[#47b09c] border-l border-[#2e6e5f]">
        <svg viewBox="0 0 10 10" className="w-[9px] h-[10px]"><path d="M5 0l5 10H0z" fill="#55cdb0" stroke="#c9fff4" /></svg>
        <div className="mt-[35px] flex-1 w-[9px] bg-[#55cdb0] border border-t-[#c9fff4] border-l-[#c9fff4] border-[#2e6e5f]" />
        <svg viewBox="0 0 10 10" className="w-[9px] h-[10px]"><path d="M0 0h10L5 10z" fill="#55cdb0" stroke="#2e6e5f" /></svg>
      </div>
    </div>
    <p className="mx-[2px] my-[3px] h-[17px] shrink-0 leading-[14px] pl-[2px] text-[10px] bg-[#ffc94f] border border-[#0d3b33]">Selected : 0</p>
  </aside>
);

// [x, y, w, h] of the populated areas on the board
const parts = [
  [84, 218, 5, 10], [112, 230, 4, 6], [130, 228, 6, 30], [138, 235, 4, 22], [154, 228, 4, 28], [160, 220, 16, 8], [140, 292, 10, 12], [80, 340, 7, 7], [80, 354, 7, 7], [80, 368, 7, 7], [93, 342, 12, 8], [93, 354, 12, 8], [93, 368, 12, 8], [81, 392, 4, 3],
  [380, 212, 16, 4], [386, 218, 5, 4], [434, 218, 12, 4], [489, 218, 5, 5],
  [258, 348, 20, 30], [252, 356, 32, 14], [238, 386, 16, 10], [258, 384, 8, 12], [304, 376, 22, 16], [328, 374, 20, 17], [352, 376, 14, 14], [370, 376, 22, 14], [310, 348, 16, 9], [312, 362, 12, 14], [312, 396, 3, 12], [336, 396, 3, 12], [358, 396, 3, 12], [386, 396, 3, 12], [402, 388, 16, 14],
  [396, 272, 16, 12], [418, 264, 12, 18], [454, 240, 10, 50], [448, 256, 22, 34], [440, 284, 40, 8], [428, 294, 10, 12], [444, 290, 12, 34], [422, 318, 26, 14], [430, 324, 20, 46], [446, 318, 40, 16], [474, 322, 20, 46], [440, 358, 44, 20], [460, 376, 24, 5],
  [572, 320, 12, 60], [562, 334, 30, 26], [556, 344, 10, 12], [598, 340, 6, 18], [608, 338, 6, 24], [624, 344, 18, 6], [632, 352, 10, 5], [650, 394, 5, 4], [650, 188, 5, 4],
];

const Board = () => (
  <svg viewBox="0 0 720 900" className="absolute left-[473px] top-[196px] w-[240px] h-[300px]" fill="none" stroke="#aaa" strokeWidth="3">
    <path d="M665 184v8h5v115h-6v115H41V192h24v-8" />
    <path d="M65 184h600" stroke="#fff" />
    <rect x="469" y="168" width="134" height="12" fill="#3f8a00" stroke="none" />
    <path d="M474 174h4M488 174h8M506 174h6M530 174h5M544 174h10M566 174h6M584 174h5" stroke="#163600" />
    <g fill="#f00808" stroke="none">
      {parts.map(([x, y, w, h]) => <rect key={`${x}-${y}`} x={x} y={y} width={w} height={h} />)}
      {[236, 248, 260, 270, 292, 304, 316, 328].map((y) => <path key={y} d={`M265 ${y}h20v7h-20zM318 ${y - 3}h27v10h-27z`} />)}
      <rect x="549" y="238" width="36" height="12" />
    </g>
    <path d="M556 253h26" stroke="#3f8a00" />
    <path d="M540 227h67v39h-67zM607 227l63-14M607 266l63 41M540 227L670 26M540 267l132 597" stroke="#ddd" />
    <g stroke="#eee">
      <circle cx="41" cy="422" r="14" />
      <path d="M17 422h50M41 398v48M22 403l38 38M60 403l-38 38M45 415h18v12H45z" />
    </g>
  </svg>
);

const XIcon = () => (
  <svg viewBox="0 0 14 13" className="w-[13px] h-[12px] shrink-0"><path d="M0 0h14v13H0z" fill="#f4f4e8" stroke="#333" /><path d="M0 0h14v3H0z" fill="#23409a" /><path d="M4 5l6 6M10 5l-6 6" stroke="#7d9a10" strokeWidth="2" /></svg>
);

const Popview = () => (
  <section className="absolute left-[698px] top-[160px] w-[388px] h-[404px] flex flex-col rounded-[6px] border border-[#c8c8c8] p-1 pt-0 bg-linear-to-b from-[#6d6f70] via-[#5a5c5e] to-[#1c1e20] shadow-[0_0_8px_#000]">
    <header className="h-[24px] shrink-0 flex items-center -mx-1 pl-[5px] rounded-t-[5px] bg-[linear-gradient(90deg,#8a8c8d,#777_18%,#14181a_55%,#26292b_65%,#777_90%)]">
      <XIcon />
      <h2 className={`ml-[4px] text-[11px] text-[#151515] ${ui}`}>Popview - 1</h2>
      <button aria-label="关闭" className="ml-auto mr-[4px] self-start w-[39px] h-[16px] rounded-b border border-t-0 border-[#e5b8ae] bg-linear-to-b from-[#d98a7c] to-[#b52a18] flex items-center justify-center">
        <svg viewBox="0 0 10 10" className="w-[9px] h-[9px]" stroke="#fff" strokeWidth="2.500"><path d="M1 1l8 8M9 1L1 9" /></svg>
      </button>
    </header>
    <div className="flex-1 min-h-0 flex bg-[#2e6e5f] pt-[2px] pl-[2px]">
      <div className={`flex-1 bg-black border-r-2 border-b-2 border-[#9ff0de] pl-[43px] pt-[129px] text-[#d81818] text-2xl leading-[28px] whitespace-nowrap ${cjk} ${half}`}>
        <p>IEMC_DRIVER_V01</p>
        <p>AY5.816.061</p>
        <p className="flex items-center leading-[26px]">SN:<span className="ml-[3px] text-[28px] leading-[26px] text-[#4c9a10]">1910120001</span></p>
      </div>
      <div className="w-[29px] ml-px bg-[#55cdb0] flex flex-col">
        {([["popup", glyphs.pop], ["up", glyphs.up], ["down", glyphs.down], ["left", glyphs.left], ["right", glyphs.right], ["out", glyphs.out], ["in", glyphs.zoomIn]] as [string, ReactNode][]).map(([name, icon]) => (
          <Tool key={name} label={name} className="w-[29px] h-[29px]">{icon}</Tool>
        ))}
      </div>
    </div>
    <button className={`mt-[2px] h-[23px] shrink-0 text-xs font-bold text-black bg-[#9cdbdb] border-2 border-t-[#c9fff4] border-l-[#c9fff4] border-b-[#3d8d7d] border-r-[#3d8d7d] ${mono}`}>Close</button>
  </section>
);

const Genesis = () => (
  <div className="flex-1 min-h-0 flex flex-col overflow-hidden bg-[#b8cfe8] border-t border-[#16406f]">
    <header className="h-[23px] shrink-0 flex items-center pl-[8px] bg-[linear-gradient(90deg,#a9cbe0_0,#c4d8e0_100px,#9fbcd4_200px,#bcd0da_330px,#7fa6cc_350px,#1f5da8_460px,#4f8ac6_640px,#1d5aa0_760px,#2b6cb0_900px,#5d92c8_1192px)]">
      <XIcon />
      <h2 className={`ml-1 text-[11px] text-[#2a3a50] ${ui}`}>Graphic Editor 9.07b2 (00@HY-HYCAM-PC125 - Windows, pid:9008)</h2>
      <div className="ml-auto self-start h-[15px] w-[78px] rounded-bl border border-t-0 border-[#9cc0e4] flex items-center justify-around text-white">
        <svg viewBox="0 0 10 10" className="w-[9px] h-[9px]"><path d="M0 6h10v3H0z" fill="currentColor" /></svg>
        <svg viewBox="0 0 10 10" className="w-[9px] h-[9px]" fill="none" stroke="currentColor" strokeWidth="2"><path d="M1 1h8v8H1zM4 5h2" /></svg>
        <svg viewBox="0 0 10 10" className="w-[9px] h-[9px]" stroke="currentColor" strokeWidth="2"><path d="M1 1l8 8M9 1L1 9" /></svg>
      </div>
    </header>
    <div className="flex-1 min-h-0 ml-[7px] flex flex-col">
      <div className="h-[47px] shrink-0 flex border-t-2 border-[#56787a] bg-[#9cdbdb]">
        <nav className={`flex-1 flex items-center gap-[14px] pl-[11px] pr-[10px] pb-[2px] border-2 border-t-[#c9fff4] border-l-[#c9fff4] border-b-[#c9fff4] border-r-[#4f7f80] ${serif} font-bold text-xs text-black`}>
          {["File", "Edit", "Actions", "Options", "Analysis", "DFM", "Step", "Rout", "Windows"].map((m) => (
            <button key={m}>
              {m === "DFM" || m === "Analysis" ? m : m === "Options" ? <>O<u>p</u>tions</> : <><u>{m[0]}</u>{m.slice(1)}</>}
            </button>
          ))}
          <button className="ml-auto">Help</button>
        </nav>
        <div className="w-[334px] shrink-0 flex items-center overflow-hidden border-l-2 border-b-2 border-[#c9fff4]">
          <div className="pl-[2px] flex items-center font-['Liberation_Sans',sans-serif] font-bold italic text-[26px] leading-none text-[#000078]">
            <svg viewBox="0 0 19 20" className="w-[18px] h-[20px]" fill="#e01818"><path d="M19 1v3L4 2.500zM18 5v3L2 6.500zM17 9v3L8 10.500zM16 13v3L0 14.500zM15 17v3L0 18.500z" /></svg>
            Fr
            <svg viewBox="0 0 16 16" className="w-[14px] h-[14px] mt-[5px] mx-[1px]"><circle cx="8" cy="8" r="7" fill="#dff" stroke="#000078" strokeWidth="1.500" /><circle cx="8" cy="8" r="3" fill="#e01818" /></svg>
            ntline
          </div>
          <div className={`ml-[4px] mr-[5px] text-center whitespace-nowrap text-black font-bold ${serif}`}>
            <p className="text-xl leading-[24px]">Genesis 2000</p>
            <p className="text-xs italic leading-[18px]">Graphic Editor</p>
          </div>
          <div className={`self-start pt-[1px] text-xs leading-[13px] italic text-black whitespace-nowrap ${mono} font-bold`}>
            <p>15 Oct 2019</p>
            <p className="pl-[11px]">10:11 PM</p>
          </div>
        </div>
      </div>

      <div className="relative flex-1 min-h-0 flex bg-black">
        <LayerPanel />
        <div className="flex-1" />
        <div className="w-[128px] shrink-0 flex flex-col overflow-hidden">
          <div className="w-[133px] grid grid-cols-[repeat(4,33px)] pt-[2px]">
            {tools.slice(0, 16).map(([label, tone, icon], i) => <Tool key={i} label={label} tone={tone}>{icon}</Tool>)}
          </div>
          <div className="h-[3px] bg-[#9ff0de]" />
          <div className="w-[133px] grid grid-cols-[repeat(4,33px)]">
            {tools.slice(16).map(([label, tone, icon], i) => <Tool key={i} label={label} tone={tone}>{icon}</Tool>)}
          </div>
          <svg viewBox="0 0 128 56" className="mt-[85px] w-[128px] h-[56px] shrink-0" fill="none"><path d="M0 1h128M0 54h128" stroke="#2c3f10" /><path d="M0 6h125l1 2v22h-2v21H0" stroke="#fff" strokeWidth="2" /></svg>
          <div className={`mt-auto h-[38px] shrink-0 pl-[3px] pt-[7px] mb-px bg-[#55cdb0] border-t border-[#c9fff4] text-xs leading-[12px] font-bold whitespace-pre text-[#123] ${mono}`}>
            X = 21.393198"<br />Y = 13.978183"
          </div>
        </div>
        <div className={`absolute left-[155px] top-[51px] w-[278px] h-[191px] border-4 border-[#0000e0] bg-white pl-[3px] pt-[1px] text-black font-medium ${cjk} ${half}`}>
          <p className="text-sm leading-[18px]"><Mixed text="在底层印序列号，序列号范围：" /></p>
          <p className="text-[15px] leading-[18px]">1910120001-1910120007</p>
        </div>
        <div className="absolute left-[139px] top-[43px] w-[343px] h-[99px] border-2 border-[#e01ed8] shadow-[2px_4px_5px_#0006]" />
        <Board />
        <Popview />
      </div>

      <div className={`h-[28px] shrink-0 flex items-stretch bg-[#ffffc8] border-b-2 border-[#444] text-[10px] font-bold text-black ${mono}`}>
        {["M7 6l10 11M7 6v4M7 6h4M17 17v-4M17 17h-4", "M5 19L19 5M7 6v8h10M15 15h4v4h-4", "M5 10q7-5 14 0v9H5zM12 6v13M5 13h14"].map((d, i) => (
          <button key={d} aria-label={`snap ${i}`} className={`w-[25px] mr-px border-2 ${i === 2 ? "border-[#55b09c]" : "border-[#e8e8b0] outline outline-[#333]"}`}>
            <svg viewBox="0 0 24 24" className="w-full h-full" fill="none" stroke="#222" strokeWidth="1.500"><path d="M2 2h20v20H2z" /><path d={d} /></svg>
          </button>
        ))}
        <label htmlFor="xy" className="w-[39px] pl-[2px] self-center whitespace-pre">X Y :</label>
        <input id="xy" className="w-[144px] border-2 border-[#777] bg-[#ffffc8]" />
        <button className="w-[26px] border-[3px] border-[#55b09c] flex items-center justify-center"><span className="w-[14px] h-[15px] leading-[13px] border border-black text-sm">!</span></button>
        <p className="pl-[4px] self-center">&lt;M1&gt; - Select first area corner</p>
        <div className="ml-auto w-[61px] relative bg-[#55cdb0] border-l-2 border-[#0d3b33] flex items-center">
          <select aria-label="单位" className="appearance-none w-full h-[22px] ml-1 pl-[5px] text-xs border-2 border-r-0 border-t-[#9ff0de] border-l-[#9ff0de] border-[#2e8d78]"><option>Inch</option></select>
          <span className="absolute right-[3px] top-[11px] w-[10px] h-[5px] border border-[#9ff0de] border-b-[#2e6e5f]" />
        </div>
      </div>
      <p className={`h-[24px] shrink-0 leading-[20px] text-center pl-[8px] bg-[#b4ffff] border-2 border-b-[3px] border-t-[#e0ffff] border-b-[#5a9c98] border-[#8ad0d0] text-[10px] font-bold text-black ${mono}`}>
        to,#10046,Pad,X=2.2907585,Y=3.8235675,zfk9,POS
      </p>
    </div>
    <div className="h-[7px] shrink-0 flex gap-[2px] pl-[10px] bg-[#1f4468]">
      <span className="w-[26px] mr-[12px] rounded-t-full bg-linear-to-b from-[#a8b4bc] to-[#d8743a]" />
      {Array.from({ length: 17 }, (_, i) => <span key={i} className="w-[51px] bg-linear-to-b from-[#9fb6c8] to-[#6a8aa6]" />)}
    </div>
  </div>
);

/* ---------- Photo viewer ---------- */

const PhotoIcon = () => (
  <svg viewBox="0 0 17 15" className="w-[17px] h-[15px] shrink-0">
    <path d="M1 1h15v13H1z" fill="#cfe6f8" stroke="#2b6aa8" strokeDasharray="4 3" strokeWidth="2" />
    <path d="M3 3h11v9H3z" fill="#fff" />
    <path d="M4 4h9v7H4z" fill="#4d8fc4" />
    <path d="M4 8q4-3 9 3H4z" fill="#2c5f6e" />
  </svg>
);

const PhotoViewer = () => (
  <section className={`absolute left-[703px] right-[13px] top-[92px] bottom-[30px] flex flex-col rounded-t-[7px] border border-[#4a5a68] shadow-[0_0_8px_#0009] bg-[#c8ffff]/35 backdrop-blur-[4px] backdrop-brightness-115 ${ui} text-xs`}>
    <header className="h-[28px] shrink-0 flex items-center pl-[6px] rounded-t-[6px] shadow-[inset_0_1px_0_#fff]">
      <PhotoIcon />
      <h2 className="ml-[4px] text-black">8s9h900ga0底层序列号.jpg - Windows 照片查看器</h2>
      <div className="ml-auto mr-[5px] self-start w-[103px] h-[19px] rounded-b border border-t-0 border-[#7d929c] flex divide-x divide-[#9fb4bc] text-[#555]">
        <button aria-label="最小化" className="w-[28px] flex items-end justify-center pb-[5px]"><span className="w-[11px] h-[4px] border border-current bg-white" /></button>
        <button aria-label="最大化" className="w-[28px] flex items-center justify-center"><svg viewBox="0 0 12 11" className="w-[12px] h-[11px]" fill="#fff" stroke="currentColor"><path d="M1 1h10v9H1zM4 4h4v3H4z" /></svg></button>
        <button aria-label="关闭" className="flex-1 flex items-center justify-center"><svg viewBox="0 0 12 10" className="w-[12px] h-[11px]"><path d="M1 1h3l2 2 2-2h3L8 5l3 4H8L6 7 4 9H1l3-4z" fill="#fff" stroke="currentColor" /></svg></button>
      </div>
    </header>
    <div className="flex-1 min-h-0 mx-[5px] flex flex-col border border-[#66788a] bg-[#eef3fa]">
      <nav className="h-[30px] shrink-0 flex items-center pl-[11px] pr-[10px] text-[#1e395b] bg-linear-to-b from-[#fafcfe] via-[#e4eef6] to-[#d6e5f2] border-b border-[#a0b4cc]">
        {["文件(F)", "打印(P)", "电子邮件(E)", "刻录(U)", "打开(O)"].map((m) => (
          <button key={m} className={`flex items-center gap-[10px] whitespace-nowrap ${m === "电子邮件(E)" ? "mr-[19px]" : "mr-[16px]"}`}>
            {m}
            {m !== "电子邮件(E)" && <Down className="text-[#1e395b]" />}
          </button>
        ))}
        <button aria-label="帮助" className="ml-auto"><Help className="w-[16px] h-[16px]" /></button>
      </nav>
      <div className="flex-1 min-h-0 pt-[51px] pb-[51px] flex flex-col">
        <Genesis />
      </div>
    </div>
    <div className="h-[57px] shrink-0 flex items-center justify-center pt-[4px]">
      <div className="w-[404px] h-[31px] flex items-center rounded-full border border-[#8fa8b8] bg-white/30 text-[#1d5fc0]">
        <button aria-label="缩放" className="ml-[29px] flex items-center gap-[5px]">
          <svg viewBox="0 0 18 18" className="w-[18px] h-[18px]" fill="#fff" stroke="#1a50b0" strokeWidth="2"><circle cx="11" cy="7" r="5.500" /><path d="M7 11l-6 6" strokeWidth="3" /><path d="M11 4v6M8 7h6" /></svg>
          <Down className="text-[#1a50b0]" />
        </button>
        <button aria-label="适应窗口" className="ml-[28px]">
          <svg viewBox="0 0 18 18" className="w-[18px] h-[18px]" fill="currentColor"><path d="M5 6h8v6H5z" fill="#fff" stroke="currentColor" strokeWidth="2" /><path d="M6 1h6L9 4zM6 17h6l-3-3zM0 6v6l3-3zM18 6v6l-3-3z" /></svg>
        </button>
        <button aria-label="上一个" className="ml-[23px] w-[54px] h-[25px] shrink-0 rounded-l-[8px] border border-[#5f7078] bg-linear-to-b from-[#eef6f8] via-[#a9bcc6] to-[#d5e6ec] flex items-center justify-center">
          <svg viewBox="0 0 14 12" className="w-[14px] h-[12px] mr-[6px]" fill="#1458c0"><path d="M0 0h3v12H0zM14 0v12L4 6z" /></svg>
        </button>
        <button aria-label="放映" className="-mx-[4px] z-10 w-[46px] h-[46px] shrink-0 rounded-full border-[3px] border-[#b8c4e8] outline outline-[#8590b0] bg-linear-to-b from-[#a8a0e8] via-[#1818a0] to-[#20b8f8] flex items-center justify-center">
          <svg viewBox="0 0 22 18" className="w-[22px] h-[18px]"><path d="M0 0h22v18H0z" fill="#f4f4f4" /><path d="M3 3h16v12H3z" fill="#8ec0e8" /><path d="M3 9q6-3 16 6H3z" fill="#3d8a70" /></svg>
        </button>
        <button aria-label="下一个" className="w-[54px] h-[25px] shrink-0 rounded-r-[8px] border border-[#5f7078] bg-linear-to-b from-[#eef6f8] via-[#a9bcc6] to-[#d5e6ec] flex items-center justify-center">
          <svg viewBox="0 0 14 12" className="w-[14px] h-[12px] ml-[6px]" fill="#1458c0"><path d="M11 0h3v12h-3zM0 0v12l10-6z" /></svg>
        </button>
        <button aria-label="逆时针旋转" className="ml-[17px]"><svg viewBox="0 0 16 18" className="w-[15px] h-[17px]" fill="none" stroke="#1c4fb4" strokeWidth="3"><path d="M4 5q9 0 9 6 0 4-7 5" /><path d="M7 0v10L1 5z" fill="#2a8ae0" stroke="none" /></svg></button>
        <button aria-label="顺时针旋转" className="ml-[18px]"><svg viewBox="0 0 16 18" className="w-[15px] h-[17px]" fill="none" stroke="#1c4fb4" strokeWidth="3"><path d="M12 5q-9 0-9 6 0 4 7 5" /><path d="M9 0v10l6-5z" fill="#2a8ae0" stroke="none" /></svg></button>
        <span className="ml-[16px] w-px h-[20px] bg-[#8fa8b8]" />
        <button aria-label="删除" className="ml-[14px]"><svg viewBox="0 0 14 14" className="w-[14px] h-[14px]" stroke="#c02a2a" strokeWidth="2"><path d="M1 1l12 12M13 0L1 14" /></svg></button>
      </div>
    </div>
  </section>
);

/* ---------- Taskbar ---------- */

const Task = ({ icon, children, on }: { icon: ReactNode; children: ReactNode; on?: boolean }) => (
  <button className={`w-[158px] shrink-0 h-[28px] flex items-center gap-[4px] pl-[9px] rounded-[2px] border border-[#686c70] text-white text-xs whitespace-nowrap overflow-hidden ${on ? "bg-linear-to-b from-[#75787c] via-[#303438] to-[#202326]" : "bg-linear-to-b from-[#54585c] via-[#22262a] to-[#16191c]"}`}>
    {icon}
    {children}
  </button>
);

const ExcelIcon = () => (
  <svg viewBox="0 0 16 16" className="w-4 h-4 shrink-0"><path d="M5 1h10v14H5z" fill="#e8f2ff" stroke="#5b86c8" /><path d="M7 11h7M7 13h7" stroke="#5b86c8" /><path d="M0 1h10v9H0z" fill="#2f9a3a" /><path d="M3 3l4 5M7 3L3 8" stroke="#fff" strokeWidth="2" /></svg>
);

const Taskbar = () => (
  <footer className={`relative z-20 h-[30px] shrink-0 flex items-center bg-linear-to-b from-[#33404a] via-[#0a0e11] to-black border-t border-[#5f6f7c] ${ui} text-white`}>
    <button aria-label="开始" className="ml-[8px] -mt-[6px] w-[38px] h-[36px]">
      <svg viewBox="0 0 38 38" className="w-[38px] h-[38px]">
        <defs><radialGradient id="start" cx=".5" cy=".9" r=".9"><stop offset="0" stopColor="#6ff0ff" /><stop offset=".5" stopColor="#2868a8" /><stop offset="1" stopColor="#b4cee0" /></radialGradient></defs>
        <circle cx="19" cy="19" r="18" fill="url(#start)" stroke="#22384c" />
        <path d="M10 12q4-3 8-1l-1 7q-4-2-8 0z" fill="#f05a28" />
        <path d="M20 11q4 2 8-1l-1 8q-4 2-8 0z" fill="#8cc63f" />
        <path d="M9 20q4-2 8 0l-1 7q-4-2-8 1z" fill="#3a8ee6" />
        <path d="M19 20q4 2 8 0l-1 7q-4 3-8 0z" fill="#fcc72c" />
      </svg>
    </button>
    <button aria-label="Internet Explorer" className="ml-[26px]"><svg viewBox="0 0 18 18" className="w-[18px] h-[18px]" fill="none"><path d="M13 12a5 5 0 1 1 1-3H5" stroke="#2fa8f0" strokeWidth="3" /><path d="M2 16Q-1 12 9 5t7-2" stroke="#f4c430" strokeWidth="1.500" /></svg></button>
    <button aria-label="资源管理器" className="ml-[28px]"><svg viewBox="0 0 18 16" className="w-[18px] h-[16px]"><path d="M1 1h7l2 2h7v12H1z" fill="#f0dc8c" /><path d="M3 7h12v8H3z" fill="#cfe8f4" /><path d="M5 10h8v6H5z" fill="#6fb8d8" /></svg></button>
    <button aria-label="Genesis" className="ml-[30px] w-[16px]"><svg viewBox="0 0 16 16" className="w-4 h-4" fill="none" stroke="#d42020" strokeWidth="3"><path d="M13 3Q4 2 3 9t9 4V9H8M12 4l3-4" /></svg></button>
    <div className="ml-[16px]">
      <Task on icon={<svg viewBox="0 0 16 16" className="w-4 h-4 shrink-0"><path d="M0 0h16v16H0z" fill="#2a50c8" /><path d="M3 0h10v6H3z" fill="#f4f4f4" /><path d="M4 9h9v7H4z" fill="#e8e8e8" /><path d="M4 2h8M4 4h8" stroke="#c03030" /></svg>}>Administrator^ - T...</Task>
    </div>
    <button aria-label="计算器" className="ml-[19px]"><svg viewBox="0 0 12 16" className="w-[12px] h-4"><path d="M0 0h12v16H0z" fill="#7cb4e0" /><path d="M2 2h8v3H2zM2 7h2v2H2zM5 7h2v2H5zM8 7h2v2H8zM2 10h2v2H2zM5 10h2v2H5zM8 10h2v2H8zM2 13h2v2H2zM5 13h2v2H5zM8 13h2v2H8z" fill="#fff" /></svg></button>
    <button aria-label="CAM" className="ml-[20px] w-[41px] h-[28px] rounded-[2px] border border-[#75797d] bg-linear-to-b from-[#85888c] to-[#2a2d30] flex items-center justify-center"><svg viewBox="0 0 15 15" className="w-[15px] h-[15px]"><path d="M0 0h15v15H0z" fill="#f4f4f4" /><path d="M2 7q2-6 7-6l1 12z" fill="#d02020" /><path d="M9 1l5 11-4 2z" fill="#20a030" /></svg></button>
    <button aria-label="360" className="ml-[17px]"><svg viewBox="0 0 16 16" className="w-4 h-4"><circle cx="8" cy="8" r="8" fill="#f2d820" /><path d="M11 2L6 7l3 3-3 4-3-1 2-3-2-4 3-4z" fill="#3fb42c" /></svg></button>
    <button aria-label="爱奇艺" className="ml-[29px]"><svg viewBox="0 0 17 16" className="w-[17px] h-4"><path d="M0 0h17v16H0z" fill="#10b010" /><path d="M2 3h13v10H2zM4 6v4M6 6h3v4H6zM11 6v4M13 6v4" fill="none" stroke="#fff" /></svg></button>
    <div className="ml-[16px] flex gap-[4px]">
      <Task icon={<svg viewBox="0 0 16 16" className="w-4 h-4 shrink-0"><path d="M8 0l2 5h6l-4 4 2 7-6-4-6 4 2-7-4-4h6z" fill="#f0902c" /><circle cx="8" cy="8" r="2" fill="#fff0c0" /></svg>} on>兴森快捷衡阳分公司...</Task>
      <Task icon={<svg viewBox="0 0 14 16" className="w-[14px] h-4 shrink-0"><path d="M0 0h14v16H0z" fill="#3aa0d8" /><path d="M1 2h12M1 5h12M1 8h12M1 11h12M1 14h12" stroke="#fff" /></svg>}>制作规范 (Ver:1.0.6)</Task>
      <Task icon={<svg viewBox="0 0 16 16" className="w-4 h-4 shrink-0"><path d="M2 0h13v9L9 16H0z" fill="#128a48" /><path d="M5 14V3h7M5 8h5" stroke="#fff" strokeWidth="2" fill="none" /></svg>}>EDS工程系统</Task>
      <div className="flex">
        <Task icon={<ExcelIcon />} on>8S9H900GA0制作单...</Task>
        <Task icon={<ExcelIcon />}>8S9H900GA0-预审...</Task>
      </div>
      <Task icon={<PhotoIcon />} on>8s9h900ga0底层序...</Task>
    </div>
    <div className="ml-auto flex items-center text-xs">
      <svg viewBox="0 0 16 14" className="w-[16px] h-[14px] mr-[7px]"><path d="M0 5h16v8H0z" fill="#d8d8d8" /><path d="M2 7h12M2 9h12M4 11h8" stroke="#555" strokeDasharray="1 1" /><path d="M8 5q0-3 4-3t3-2" stroke="#d8d8d8" fill="none" /></svg>
      <Help className="w-[15px] h-[15px] mr-[9px]" />
      <svg viewBox="0 0 9 20" className="w-[9px] h-[20px] mr-[12px]" fill="none" stroke="#fff"><path d="M3 3V1h5v4H6M1 3h5v4H1z" /><path d="M1 15h7l-3.500 3z" fill="#fff" stroke="none" /></svg>
      <Down className="rotate-180 text-white mr-[17px]" />
      <svg viewBox="0 0 16 14" className="w-[16px] h-[14px] mr-[14px]"><path d="M0 14L10 0v8l-5 6z" fill="#e02020" /><path d="M10 2l6 12h-4l-3-6z" fill="#20b030" /></svg>
      <svg viewBox="0 0 16 16" className="w-[16px] h-4 mr-[9px]"><circle cx="8" cy="8" r="8" fill="#3a94f0" /><path d="M3 3l10 3-4 7-1-3-3-2z" fill="#fff" /></svg>
      <svg viewBox="0 0 15 15" className="w-[15px] h-[15px] mr-[9px]"><path d="M1 0v14" stroke="#fff" strokeWidth="2" /><path d="M3 1q4 0 5 2h4v5H8Q6 6 3 7z" fill="#fff" /><circle cx="10" cy="10" r="4.500" fill="#e02020" /><path d="M8 8l4 4M12 8l-4 4" stroke="#fff" strokeWidth="1.500" /></svg>
      <svg viewBox="0 0 15 15" className="w-[15px] h-[15px] mr-[9px]" fill="none" stroke="#fff" strokeWidth="1.500"><path d="M5 3h9v7H5M7 13h6M10 10v3M1 1v3h3V1M2 4v6h3" /></svg>
      <svg viewBox="0 0 15 14" className="w-[15px] h-[14px] mr-[19px]" fill="#fff"><path d="M0 5h3l4-4v12L3 9H0z" /><path d="M9 5q2 2 0 4M11 3q4 4 0 8M13 1q5 6 0 12" fill="none" stroke="#fff" /></svg>
      <time className="text-xs mr-[14px]">13:54</time>
      <button aria-label="显示桌面" className="w-[12px] h-[28px] mr-[2px] border border-[#4a4e52] bg-linear-to-b from-[#3a3e42] to-black" />
    </div>
  </footer>
);

export default function App() {
  return (
    <main className="relative h-screen w-full flex flex-col overflow-hidden bg-black">
      <Excel />
      <PhotoViewer />
      <Taskbar />
    </main>
  );
}
